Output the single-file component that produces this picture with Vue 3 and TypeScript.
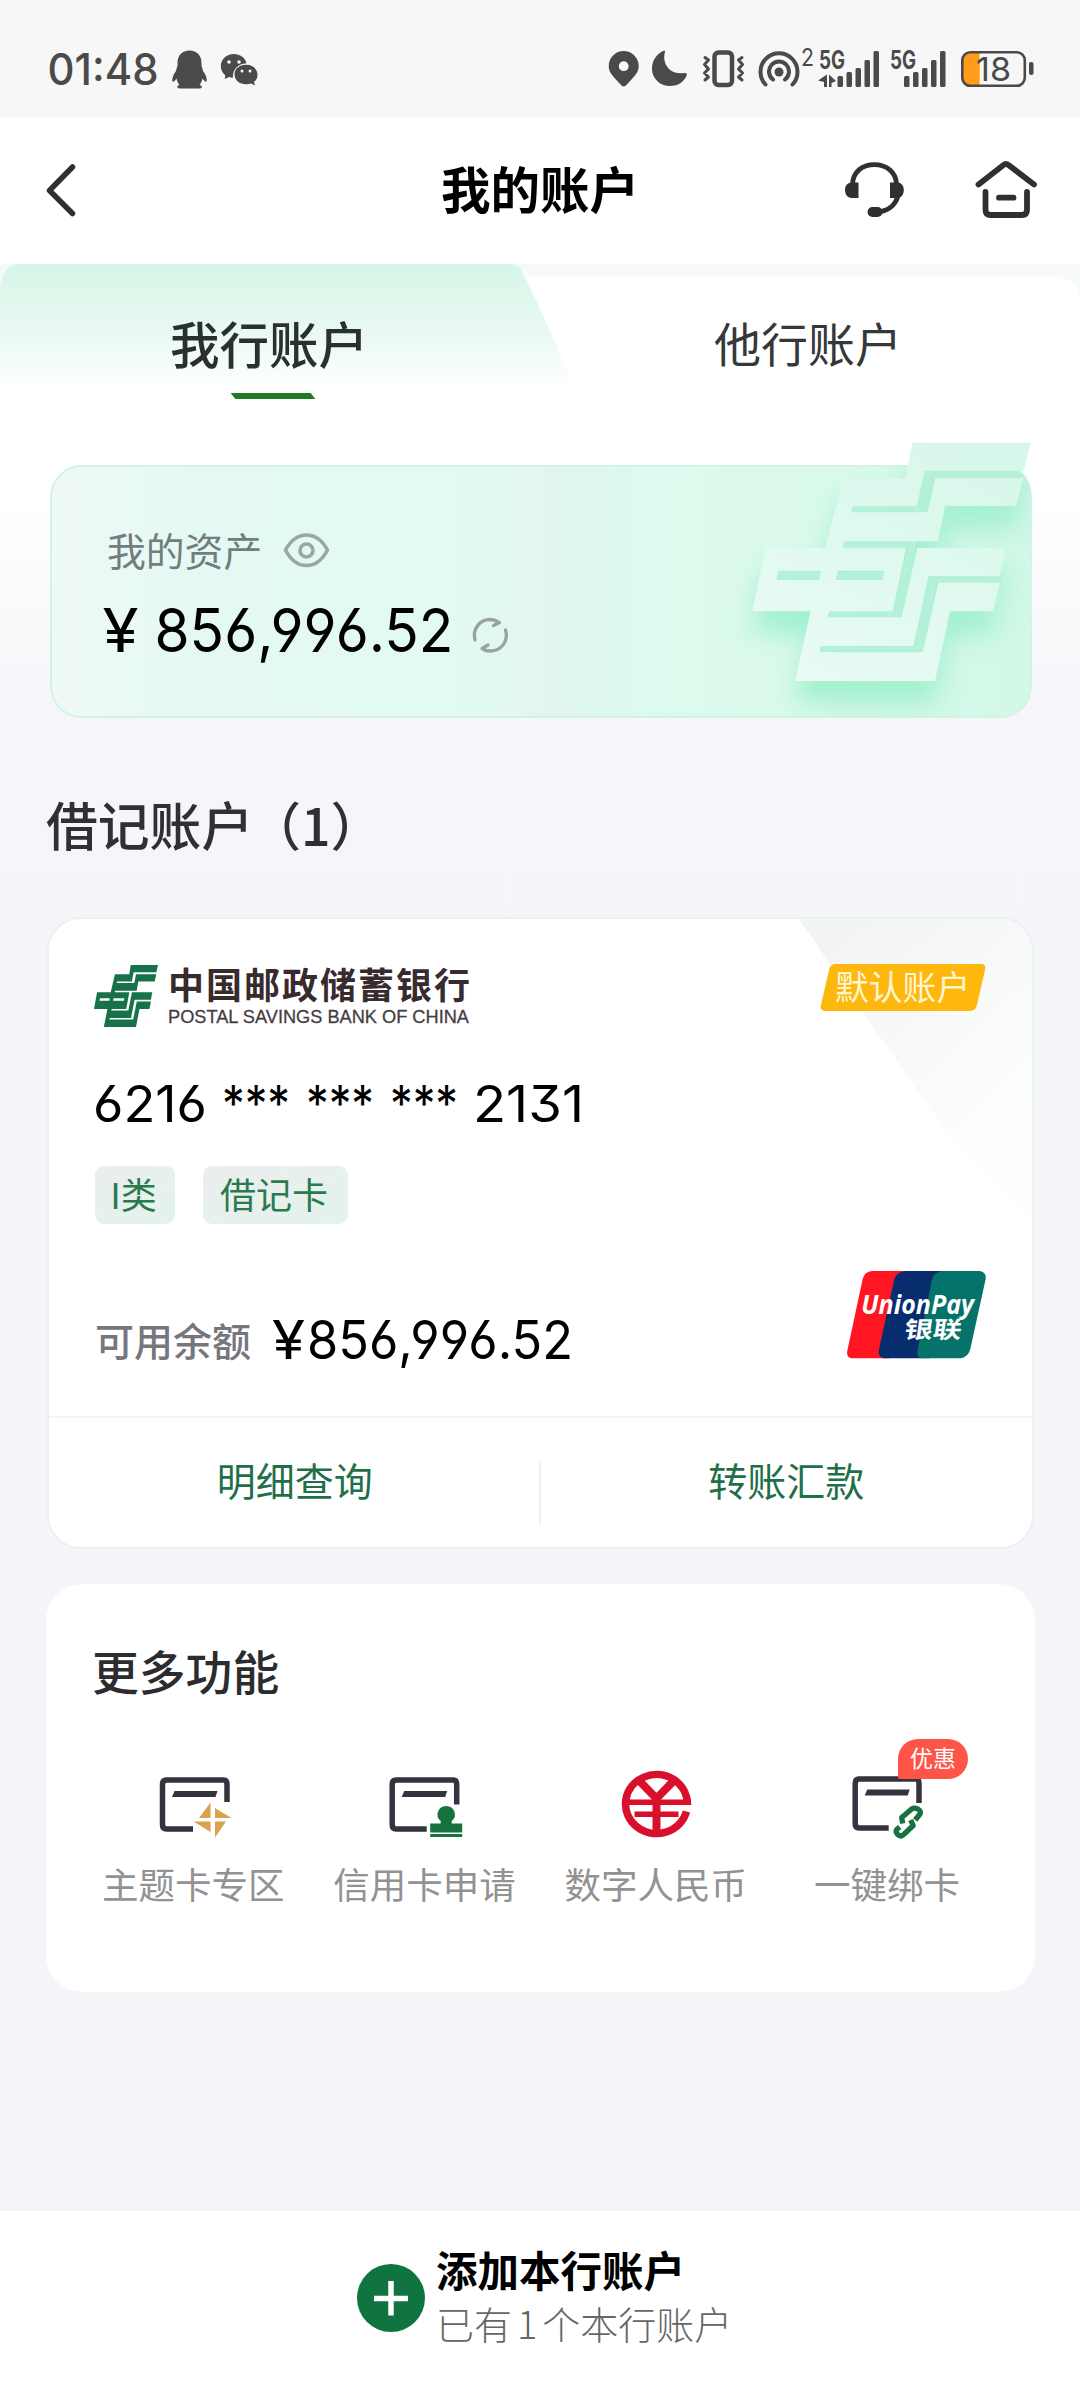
<script setup lang="ts">
interface Feature {
  label: string
  icon: 'theme' | 'stamp' | 'ecny' | 'link'
  badge?: string
}

interface Bar {
  x: number
  y: number
}

interface Segment {
  text: string
  x: number
  width: number
}

const features: Feature[] = [
  { label: '主题卡专区', icon: 'theme' },
  { label: '信用卡申请', icon: 'stamp' },
  { label: '数字人民币', icon: 'ecny' },
  { label: '一键绑卡', icon: 'link', badge: '优惠' },
]

const simOne: Bar[] = [
  { x: 837.5, y: 76 }, { x: 846.5, y: 72 }, { x: 855.5, y: 68 }, { x: 864.5, y: 60 }, { x: 873.5, y: 51 },
]
const simTwo: Bar[] = [
  { x: 904, y: 76 }, { x: 913, y: 72 }, { x: 922, y: 68 }, { x: 931, y: 60 }, { x: 940, y: 51 },
]

const cardNumber: Segment[] = [
  { text: '6216', x: 0, width: 114 },
  { text: '***', x: 129, width: 68 },
  { text: '***', x: 213, width: 68 },
  { text: '***', x: 297, width: 68 },
  { text: '2131', x: 380, width: 111 },
]

const emblem =
  'M637 68H992L971 152H675L650 258H458L453 277H683L705 174H970L948 258H735L714 364H432L428 383H618L578 574H388L382 592H605L652 383H918L899 468H686L640 678H362L358 697H668L715 488H900L880 574H750L705 783H285L332 574H157L197 383H375L430 174H616Z' +
  'M235 452L229 480H357L363 452ZM413 452L407 480H547L553 452Z'
</script>

<template>
  <div class="page">
    <header class="status">
      <svg class="status-left" width="220" height="60" viewBox="45 40 220 60">
        <text x="47.5" y="84.5" class="clock" textLength="111" lengthAdjust="spacingAndGlyphs">01:48</text>
        <path fill="#4a4a4a" d="M189.500 50.500C182 50.500 177.500 55.500 177.500 63V66C176.500 68 176.500 69 176 71C173.500 74 172 78 172.300 81C172.700 83 175 81 176.500 78.500C177 81 178 83 179.500 85C176.500 85.500 177 88.500 179.500 88.500H200C202.500 88.500 202.500 85.500 199.500 85C201 83 202 81 202.500 78.500C204 81 206.300 83 206.700 81C207 78 205.500 74 203 71C202.500 69 202.500 68 201.500 66V63C201.500 55.500 197 50.500 189.500 50.500Z" />
        <path fill="#4a4a4a" d="M234 54C226.500 54 220.800 59.500 220.800 66C220.800 70 222.500 73 225.300 75.300L224.700 79L229 77C230.500 77.500 231.500 77.800 233 77.800C232 70 238 63.500 246.500 63.200C245 57.500 240 54 234 54Z" />
        <path fill="#4a4a4a" d="M246 64.800C239 64.800 234.500 69.300 234.500 74.500C234.500 80 239.500 84.300 246 84.300C248 84.300 249.500 84 251 83.500L255 85.500L254 82C256.500 80 257.500 77.500 257.500 74.500C257.500 69 252.500 64.800 246 64.800Z" />
        <g fill="#f7f7f7">
          <circle cx="229" cy="62" r="1.800" /><circle cx="239" cy="62" r="1.800" />
          <circle cx="242" cy="71" r="1.500" /><circle cx="250" cy="71" r="1.500" />
        </g>
      </svg>
      <svg class="status-right" width="440" height="60" viewBox="600 40 440 60">
        <g fill="#4a4a4a">
          <path fill-rule="evenodd" d="M623.700 51A15 15 0 0 0 608.700 66C608.700 72 612 75.500 621.500 85.500Q623.700 87.500 625.900 85.500C635.500 75.500 638.700 72 638.700 66A15 15 0 0 0 623.700 51ZM623.700 61.300A4.900 4.900 0 1 1 623.700 71.100A4.900 4.900 0 1 1 623.700 61.300Z" />
          <path d="M665 52C662 62 668 75 684 73C686.500 72.700 687.500 74 686.500 76C683 83 677 86 670 86C660 86 652 78.500 652 69C652 61 656 55 662 51.500C664 50.500 665.500 50.500 665 52Z" />
          <circle cx="779" cy="72" r="4.500" />
          <path d="M827 74.500V87H824V82L818 80.500ZM829 74.500L836 81L831.500 83V87H829Z" />
          <rect v-for="bar in simOne" :key="bar.x" :x="bar.x" :y="bar.y" width="5.500" :height="87 - bar.y" rx="1.500" />
          <rect v-for="bar in simTwo" :key="bar.x" :x="bar.x" :y="bar.y" width="5.500" :height="87 - bar.y" rx="1.500" />
          <rect x="1029" y="62" width="4.500" height="13" rx="2" />
        </g>
        <g fill="none" stroke="#4a4a4a" stroke-linecap="round">
          <rect x="714.500" y="52.500" width="17.500" height="32.500" rx="4" stroke-width="4.500" />
          <path stroke-width="3" stroke-linejoin="round" d="M705 57.500L708.500 60L704.500 64.500L708.500 69L704.500 73L708.500 77L705 80M742 57.500L738.500 60L742.500 64.500L738.500 69L742.500 73L738.500 77L742 80" />
          <path stroke-width="4" d="M765.500 84.500A18.500 18.500 0 1 1 792.500 84.500M773 79.500A10 10 0 1 1 785 79.500" />
        </g>
        <rect x="962.500" y="52.500" width="17" height="33" rx="7" fill="#ff9c1a" />
        <rect x="973" y="53" width="6.500" height="32" fill="#ff9c1a" />
        <rect x="962.300" y="52.300" width="62.500" height="33.500" rx="8" fill="none" stroke="#4a4a4a" stroke-width="2.600" />
        <text x="801" y="66" class="sig" font-size="24" textLength="13" lengthAdjust="spacingAndGlyphs">2</text>
        <text x="819" y="69" class="sig bold" font-size="25" textLength="26" lengthAdjust="spacingAndGlyphs">5G</text>
        <text x="890" y="69" class="sig bold" font-size="25" textLength="26" lengthAdjust="spacingAndGlyphs">5G</text>
        <text x="976" y="80.500" class="sig" font-size="33" textLength="35" lengthAdjust="spacingAndGlyphs">18</text>
      </svg>
    </header>

    <nav class="navbar">
      <svg class="back" width="34" height="60" viewBox="44 160 34 60">
        <path d="M72.500 167L49.500 190.500L72.500 213.500" fill="none" stroke="#303030" stroke-width="5.500" stroke-linecap="round" stroke-linejoin="round" />
      </svg>
      <h1 class="nav-title">我的账户</h1>
      <div class="nav-icons">
        <svg width="64" height="64" viewBox="842 158 64 64">
          <g fill="none" stroke="#303030" stroke-width="4.800">
            <path d="M852.500 184C853 172 862 164.700 874.300 164.700C886.500 164.700 896 172 896.500 184" />
            <path d="M898 196C895 206 887 211.500 877 212" />
          </g>
          <path fill="#303030" d="M858.500 182.500V198H852C848 198 845 195 845 190C845 185 848 182.500 852 182.500ZM890 182.500V198H897C901 198 903.800 195 903.800 190C903.800 185 901 182.500 897 182.500Z" />
          <rect x="867.500" y="207" width="15" height="10" rx="5" fill="#303030" />
        </svg>
        <svg width="68" height="64" viewBox="972 158 68 64">
          <g fill="none" stroke="#303030" stroke-width="5.800" stroke-linecap="round" stroke-linejoin="round">
            <path d="M978.500 184.500L1003.500 165Q1006 163 1008.500 165L1034 184.500" />
            <path d="M985.500 192V210Q985.500 215 990.500 215H1022Q1027 215 1027 210V192M999 197.700H1013.500" />
          </g>
        </svg>
      </div>
    </nav>

    <section class="tabs">
      <svg class="tabs-bg" width="1080" height="156" viewBox="0 264 1080 156" aria-hidden="true">
        <defs>
          <linearGradient id="tabFill" x1="0" y1="0" x2="0" y2="1">
            <stop offset="0" stop-color="#d5f6e8" /><stop offset="0.550" stop-color="#e9f9f1" /><stop offset="1" stop-color="#ffffff" />
          </linearGradient>
          <linearGradient id="stripFill" x1="0" y1="0" x2="0" y2="1">
            <stop offset="0" stop-color="#f5faf8" /><stop offset="1" stop-color="#ffffff" />
          </linearGradient>
        </defs>
        <rect x="0" y="264" width="1080" height="70" fill="url(#stripFill)" />
        <path d="M500 276H1050Q1080 276 1080 304V420H500Z" fill="#fff" />
        <path d="M0 388V286Q4 264 20 264H512Q518 264 522 272C540 306 556 345 574 388Z" fill="url(#tabFill)" />
      </svg>
      <div class="tab active"><span>我行账户</span><i class="underline"></i></div>
      <div class="tab other"><span>他行账户</span></div>
    </section>

    <main class="content">
      <section class="assets">
        <svg class="assets-emblem" width="380" height="320" viewBox="0 0 1140 960" aria-hidden="true">
          <defs>
            <linearGradient id="emblemFill" x1="0.200" y1="1" x2="0.800" y2="0">
              <stop offset="0" stop-color="#e8fbf5" /><stop offset="1" stop-color="#d7f7ea" />
            </linearGradient>
            <filter id="soft" x="-30%" y="-30%" width="160%" height="170%"><feGaussianBlur stdDeviation="42" /></filter>
            <clipPath id="cardClip"><path d="M0 138H905Q993 138 993 226V806Q993 893 905 893H0Z" /></clipPath>
          </defs>
          <g clip-path="url(#cardClip)">
            <path :d="emblem" fill="#93edc8" filter="url(#soft)" transform="translate(0 62)" opacity="0.900" />
          </g>
          <g fill="none" stroke="#b5f0d8" stroke-width="22">
            <path d="M450 268H667L690 163H962M428 373H636L592 583H382M356 688H654L700 478H905M228 466H553" />
          </g>
          <path :d="emblem" fill="url(#emblemFill)" fill-rule="evenodd" />
        </svg>
        <div class="assets-label">
          <span>我的资产</span>
          <svg width="48" height="40" viewBox="282 530 48 40">
            <g fill="none" stroke="#98a8a4" stroke-width="3.600">
              <path stroke-linejoin="round" d="M285.500 550C291 540 298 535 306.500 535C315 535 322 540 327.500 550C322 560.500 315 565.500 306.500 565.500C298 565.500 291 560.500 285.500 550Z" />
              <circle cx="306.500" cy="550.500" r="6.500" />
            </g>
          </svg>
        </div>
        <div class="assets-amount">
          <svg width="356" height="78" viewBox="100 593 356 78">
            <text class="num" x="102.500" y="652" font-size="60.500" textLength="36" lengthAdjust="spacingAndGlyphs">¥</text>
            <text class="num" x="154.500" y="652" font-size="60.500" textLength="299" lengthAdjust="spacingAndGlyphs">856,996.52</text>
          </svg>
          <svg class="refresh" width="40" height="40" viewBox="470 615 40 40">
            <g fill="none" stroke="#98a39f" stroke-width="3.300" stroke-linecap="round" stroke-linejoin="round">
              <path d="M475 640C472 629 480 619.500 490 619.500C493.500 619.500 496.500 620.500 499.500 622.500L493.500 625.500" />
              <path d="M505.500 630C509 641 501 651 490.500 651C487 651 484.500 650.500 482 648.500L488 645" />
            </g>
          </svg>
        </div>
      </section>

      <h2 class="section-title">借记账户<span class="count">（1）</span></h2>

      <section class="card">
        <svg class="card-deco" width="233" height="300" viewBox="0 0 233 300" aria-hidden="true">
          <defs>
            <linearGradient id="decoFill" x1="0.200" y1="0" x2="0.850" y2="0.900">
              <stop offset="0" stop-color="#f1f4f3" /><stop offset="0.550" stop-color="#f9fbfb" /><stop offset="1" stop-color="#fefeff" />
            </linearGradient>
          </defs>
          <path d="M0 0H233V300Q170 235 138 200Z" fill="url(#decoFill)" />
        </svg>

        <div class="card-head">
          <svg class="bank-mark" width="64" height="62" viewBox="157 68 835 715" preserveAspectRatio="none">
            <path :d="emblem" fill="#17724a" fill-rule="evenodd" />
          </svg>
          <div class="bank-name">
            <span class="bank-cn">中国邮政储蓄银行</span>
            <svg width="304" height="24" viewBox="0 0 304 24">
              <text class="bank-en" x="0" y="18" textLength="301" lengthAdjust="spacingAndGlyphs">POSTAL SAVINGS BANK OF CHINA</text>
            </svg>
          </div>
          <div class="default-badge"><span>默认账户</span></div>
        </div>

        <svg class="card-number" width="500" height="64" viewBox="0 0 500 64">
          <text class="num" y="50" font-size="50">
            <tspan v-for="seg in cardNumber" :key="seg.x" :x="seg.x" :textLength="seg.width" lengthAdjust="spacingAndGlyphs">{{ seg.text }}</tspan>
          </text>
        </svg>

        <div class="tags">
          <span class="tag">I类</span>
          <span class="tag wide">借记卡</span>
        </div>

        <div class="balance">
          <span class="balance-label">可用余额</span>
          <svg width="310" height="72" viewBox="270 1305 310 72">
            <text class="num" x="272" y="1359" font-size="53" textLength="33" lengthAdjust="spacingAndGlyphs">¥</text>
            <text class="num" x="307" y="1359" font-size="53" textLength="266" lengthAdjust="spacingAndGlyphs">856,996.52</text>
          </svg>
          <svg class="unionpay" width="140" height="90" viewBox="203 88 420 270">
            <path fill="#ff1622" d="M278 91H380L330 353H218Q200 350 204 330L250 115Q256 93 278 91Z" />
            <path fill="#072d6e" d="M380 91H490L450 353H312Q294 348 299 326L345 115Q352 93 380 91Z" />
            <path fill="#05736a" d="M490 91H602Q622 95 619 115L573 325Q566 350 544 353H426Q410 350 415 328L458 115Q465 93 490 91Z" />
            <g fill="#fff" font-weight="700">
              <text x="246" y="220" font-size="82" font-style="italic" class="up-en" textLength="338" lengthAdjust="spacingAndGlyphs">UnionPay</text>
              <text x="0" y="0" font-size="70" class="up-cn" transform="translate(372 292) skewX(-8)" textLength="172" lengthAdjust="spacingAndGlyphs">银联</text>
            </g>
          </svg>
        </div>

        <div class="actions">
          <button type="button" class="action">明细查询</button>
          <i class="split"></i>
          <button type="button" class="action">转账汇款</button>
        </div>
      </section>

      <section class="more">
        <h3 class="more-title">更多功能</h3>
        <div class="grid">
          <div v-for="item in features" :key="item.icon" class="feature">
            <div class="feature-icon">
              <svg v-if="item.icon === 'theme'" width="80" height="72" viewBox="152.500 1769.500 80 72">
                <path fill="none" stroke="#34333e" stroke-width="5.500" d="M192.500 1828.500H166Q162 1828.500 162 1824V1784Q162 1779.500 166 1779.500H223Q226.500 1779.500 226.500 1784V1801.500" />
                <path fill="#34333e" d="M174 1790.500H217L215 1796.500H171.500Z" />
                <path fill="#dca14f" d="M210 1802V1817.500H198.500ZM214.500 1807.500L231 1817.500H214.500ZM193 1821H210V1831.500ZM214.500 1821H225.500L214.500 1837Z" />
              </svg>
              <svg v-else-if="item.icon === 'stamp'" width="80" height="72" viewBox="383.800 1769.500 80 72">
                <path fill="none" stroke="#34333e" stroke-width="5.500" d="M426.500 1828.500H396Q392 1828.500 392 1824V1784Q392 1779.500 396 1779.500H453Q456.500 1779.500 456.500 1784V1804" />
                <path fill="#34333e" d="M404 1790.500H447L445 1796.500H401.500Z" />
                <path fill="#16723f" d="M446 1805.500A9 8.500 0 0 1 451.500 1820.500V1823H462V1832H430V1823H440.500V1820.500A9 8.500 0 0 1 446 1805.500ZM430 1833.500H462V1836.500H430Z" />
              </svg>
              <svg v-else-if="item.icon === 'ecny'" width="80" height="72" viewBox="615.500 1769.500 80 72">
                <g fill="none" stroke="#d8102b">
                  <path stroke-width="7.500" d="M687 1804.300A31 29.500 0 1 0 686 1811" />
                  <path stroke-width="5.500" d="M626 1801.800H690.500M634 1813.800H678" />
                  <path stroke-width="8" d="M638.500 1780L656 1798L673.500 1780M656 1797V1834" />
                </g>
              </svg>
              <svg v-else width="80" height="72" viewBox="846.800 1769.500 80 72">
                <path fill="none" stroke="#34333e" stroke-width="5.500" d="M888.500 1827.500H859Q855 1827.500 855 1823V1783Q855 1778.500 859 1778.500H916Q918.800 1778.500 918.800 1783V1802.500" />
                <path fill="#34333e" d="M867 1789H909.500L907.500 1795H864.500Z" />
                <path fill="none" stroke="#16723f" stroke-width="5.300" stroke-linejoin="round" d="M902.500 1823L901.500 1817L911.500 1808.500C915 1806 921.500 1809.500 919.800 1813.500L915 1819.500M910.500 1819.500L913 1825L903.500 1834C900 1837.500 894.500 1833 896.500 1829L899.500 1826.500" />
              </svg>
              <span v-if="item.badge" class="badge">{{ item.badge }}</span>
            </div>
            <span class="feature-label">{{ item.label }}</span>
          </div>
        </div>
      </section>
    </main>

    <footer class="footer">
      <svg width="68" height="68" viewBox="0 0 68 68">
        <circle cx="34" cy="34" r="34" fill="#0f743f" />
        <path d="M17 34.500H51M34 17V51.500" stroke="#fff" stroke-width="5.500" />
      </svg>
      <div class="footer-text">
        <strong>添加本行账户</strong>
        <span>已有<b>1</b>个本行账户</span>
      </div>
    </footer>
  </div>
</template>

<style>
body {
  margin: 0;
}
</style>

<style scoped>
.page {
  width: 1080px;
  height: 2386px;
  display: flex;
  flex-direction: column;
  overflow: hidden;
  font-family: "Noto Sans CJK SC", "Noto Sans", sans-serif;
  background: linear-gradient(180deg, #fff 0, #fff 500px, #f5f5fa 730px, #f4f4f9 100%);
}
svg {
  display: block;
  flex: none;
}
h1, h2, h3 {
  margin: 0;
}
.status {
  flex: none;
  height: 117px;
  background: #f7f7f7;
  display: flex;
  justify-content: space-between;
  box-sizing: border-box;
  padding: 40px 40px 0 45px;
}
.clock {
  font: 500 43.5px Inter, sans-serif;
  fill: #4a4a4a;
}
.sig {
  font-family: Inter, Roboto, sans-serif;
  fill: #4a4a4a;
}
.sig.bold {
  font-weight: 700;
}
.navbar {
  flex: none;
  height: 147px;
  box-sizing: border-box;
  background: #fff;
  display: grid;
  grid-template-columns: 1fr auto 1fr;
  align-items: center;
  padding: 0 40px 1px 44px;
}
.nav-title {
  font-size: 49.5px;
  font-weight: 700;
  line-height: 70px;
  color: #000;
  padding-bottom: 5px;
  margin-left: -4px;
}
.nav-icons {
  display: flex;
  justify-content: flex-end;
  gap: 66px;
}
.tabs {
  flex: none;
  height: 156px;
  position: relative;
  display: flex;
}
.tabs-bg {
  position: absolute;
  inset: 0;
}
.tab {
  position: relative;
  width: 540px;
  display: flex;
  flex-direction: column;
  align-items: center;
  padding-top: 44px;
  font-size: 47px;
  line-height: 70px;
  color: #353838;
}
.tab.other {
  padding-top: 43px;
}
.tab.active {
  width: 538px;
  font-size: 49.5px;
  font-weight: 500;
  color: #2a302d;
}
.underline {
  width: 80px;
  height: 6px;
  margin: 14.500px 0 0 8px;
  background: #1f7a22;
  transform: skewX(38deg);
}
.content {
  display: flex;
  flex-direction: column;
}
.assets {
  position: relative;
  margin: 45px 48px 0 50px;
  height: 253px;
  box-sizing: border-box;
  border: 2px solid #d3f3e6;
  border-radius: 32px;
  background: linear-gradient(90deg, #eff9f7 0, #e4f9f3 16%, #e2faf2 40%, #e1f6ee 52%, #dcfaed 60%, #dbfaec 75%, #d2f8e8 100%);
  padding: 52px 0 0 54px;
}
.assets-emblem {
  position: absolute;
  left: 648px;
  top: -47px;
}
.assets-label {
  position: relative;
  display: flex;
  align-items: center;
  gap: 20px;
  font-size: 38.800px;
  line-height: 60px;
  color: #727d7c;
  padding-left: 1px;
}
.assets-label span {
  padding-bottom: 2px;
}
.assets-amount {
  position: relative;
  display: flex;
  margin: 12px 0 0 -6px;
}
.refresh {
  margin: 22px 0 0 14px;
}
.num {
  font-family: Inter, "Noto Sans", sans-serif;
  font-feature-settings: "ss01", "cv03", "cv04";
  fill: #000;
}
.section-title {
  height: 199px;
  box-sizing: border-box;
  padding: 71px 0 0 46px;
  font-size: 51.800px;
  line-height: 70px;
  font-weight: 500;
  color: #2f2f36;
}
.count {
  margin-left: 22px;
  font-feature-settings: "halt";
}
.card {
  position: relative;
  margin: 0 46px 0 47px;
  height: 632px;
  box-sizing: border-box;
  border: 2px solid #e6f3f1;
  border-radius: 34px;
  background: #fff;
  overflow: hidden;
  display: flex;
  flex-direction: column;
}
.card-deco {
  position: absolute;
  right: 0;
  top: 0;
}
.card-head {
  position: relative;
  display: flex;
  box-sizing: border-box;
  padding: 45px 46px 0 45px;
  height: 110px;
}
.bank-mark {
  margin-top: 1px;
}
.bank-name {
  margin-left: 10px;
  display: flex;
  flex-direction: column;
}
.bank-cn {
  font-size: 36px;
  line-height: 44px;
  height: 44px;
  letter-spacing: 2px;
  font-weight: 700;
  color: #382b2d;
  margin-top: -3px;
}
.bank-en {
  font: 19px "Liberation Sans", Arial, sans-serif;
  fill: #453d3f;
  stroke: #453d3f;
  stroke-width: 0.3px;
}
.default-badge {
  position: relative;
  margin-left: auto;
  width: 156px;
  height: 47px;
  border-radius: 5px;
  background: #feb70d;
  transform: skewX(-13deg);
  margin-right: 5px;
  display: flex;
  justify-content: center;
}
.default-badge span {
  transform: skewX(13deg);
  font-size: 33.800px;
  line-height: 43px;
  color: #fff6d2;
}
.card-number {
  margin: 43px 0 0 44px;
}
.tags {
  display: flex;
  gap: 28px;
  margin: 30px 0 0 46px;
}
.tag {
  width: 80px;
  height: 58px;
  border-radius: 9px;
  background: linear-gradient(160deg, #ebeeed, #e3f3ec);
  color: #2a7a50;
  font-size: 36px;
  line-height: 54px;
  text-align: center;
  text-indent: -3px;
}
.tag.wide {
  width: 145px;
}
.balance {
  display: flex;
  height: 90px;
  margin: 45px 0 0 46px;
}
.balance-label {
  width: 175px;
  padding-top: 40px;
  line-height: 60px;
  font-size: 39px;
  font-weight: 500;
  color: #77767d;
}
.balance > svg:nth-of-type(1) {
  margin-top: 36px;
}
.balance .unionpay {
  margin-left: 267px;
  margin-top: 1px;
}
.up-en {
  font-family: "Open Sans", "Noto Sans", sans-serif;
}
.up-cn {
  font-family: "Noto Sans CJK SC", sans-serif;
}
.actions {
  margin-top: auto;
  height: 129px;
  border-top: 2px solid #f2f3f5;
  display: flex;
}
.action {
  flex: 1;
  border: 0;
  background: none;
  padding: 0 0 7px;
  font: 39px "Noto Sans CJK SC", sans-serif;
  color: #1f7049;
}
.split {
  width: 2px;
  height: 64px;
  margin: 43px 0 0 -2px;
  background: #efeff2;
}
.more {
  margin: 35px 45px 0 46px;
  height: 408px;
  border-radius: 36px;
  background: #fff;
}
.more-title {
  padding: 50px 0 0 46px;
  font-size: 46.800px;
  line-height: 72px;
  font-weight: 500;
  color: #2c2c2e;
}
.grid {
  display: flex;
  padding: 64px 0 0 31.5px;
}
.feature {
  width: 231.300px;
  display: flex;
  flex-direction: column;
  align-items: center;
}
.feature-icon {
  position: relative;
}
.badge {
  position: absolute;
  left: 51px;
  top: -31px;
  width: 70px;
  height: 40px;
  border-radius: 20px 20px 20px 2px;
  background: #ff5549;
  color: #fff;
  font-size: 23px;
  line-height: 37px;
  text-align: center;
}
.feature-label {
  margin-top: 12px;
  font-size: 36.500px;
  line-height: 60px;
  color: #929292;
}
.footer {
  margin-top: auto;
  flex: none;
  height: 175px;
  box-sizing: border-box;
  background: #fff;
  display: flex;
  padding: 53px 0 0 357px;
}
.footer-text {
  display: flex;
  flex-direction: column;
  margin: -22px 0 0 11px;
}
.footer-text strong {
  font-size: 41.500px;
  line-height: 54px;
  height: 54px;
  font-weight: 700;
  color: #000;
}
.footer-text span {
  font-size: 38px;
  line-height: 54px;
  font-weight: 300;
  color: #666;
}
.footer-text b {
  font-weight: 300;
  padding: 0 5px;
}
</style>
